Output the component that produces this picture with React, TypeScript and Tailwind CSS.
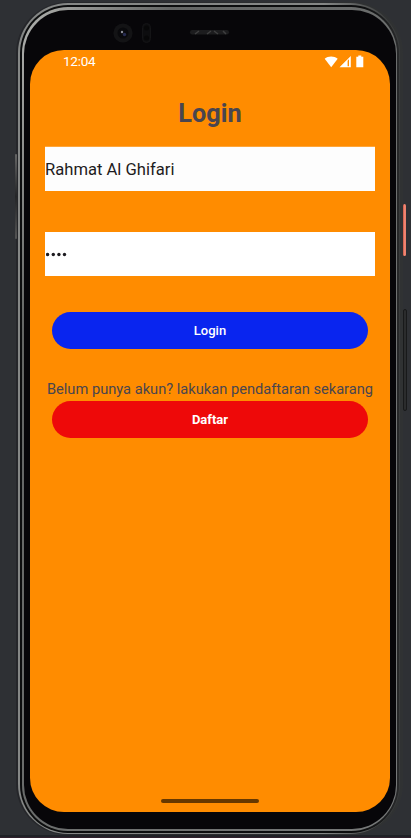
import React from "react";

function StatusBar() {
  return (
    <header className="flex h-6 items-center justify-between pl-[33px] pr-[26px] text-white">
      <span className="pb-0.5 text-[13.6px] leading-[22px] tracking-[-0.3px]">12:04</span>
      <div className="flex items-center">
        <svg width="40" height="14" viewBox="0 0 40 14" fill="currentColor" aria-label="Wi-Fi, signal, battery">
          <path d="M0.7 3.7C4 0.6 10.2 0.6 13.7 3.7L7.2 12.2Z" />
          <path fillRule="evenodd" d="M15.5 12.2L26.8 1V12.2ZM23.6 5.7V11.2H25V4.3Z" />
          <path d="M34.3 .5h3v1.2h2V12.3h-7V1.7h2Z" />
        </svg>
      </div>
    </header>
  );
}

function Screen() {
  return (
    <main className="relative flex h-[762px] w-[360px] flex-col overflow-hidden rounded-[34px] bg-[#ff8c00]">
      <StatusBar />
      <h1 className="mt-[22px] h-9 text-center text-[25.3px] leading-9 font-bold text-[#49454f]">Login</h1>
      <div className="mx-[15px] mt-[14px] h-px bg-[#ffa63a]" />
      <div className="mx-[15px] flex h-11 items-center bg-[#fdfdfd] pt-[2px] text-[16.6px] text-[#1d1b20]">
        <span>Rahmat Al Ghifari</span>
      </div>
      <div className="mx-[15px] mt-[41px] flex h-11 items-center bg-white pt-px pl-px" aria-label="Password">
        <svg width="22" height="5" viewBox="0 0 22 5" fill="#1d1b20">
          <circle cx="1.6" cy="2.5" r="1.7" />
          <circle cx="7.3" cy="2.5" r="1.7" />
          <circle cx="12.9" cy="2.5" r="1.7" />
          <circle cx="18.5" cy="2.5" r="1.7" />
        </svg>
      </div>
      <button className="mx-[22px] mt-9 h-[37px] rounded-full bg-[#0925ef] text-[13px] font-medium text-white">Login</button>
      <p className="mt-[29px] h-[23px] text-center text-[14.65px] leading-[23px] whitespace-nowrap text-[#49454f]">
        Belum punya akun? lakukan pendaftaran sekarang
      </p>
      <button className="mx-[22px] h-[37px] rounded-full bg-[#ee0909] pt-px text-[13px] font-bold text-white">Daftar</button>
      <div className="mx-auto mt-auto mb-[9px] h-1 w-[98px] rounded-full bg-[#663800]" />
    </main>
  );
}

function Camera() {
  return (
    <svg className="absolute left-[89px] top-[12px]" width="120" height="28" viewBox="0 0 120 28">
      <circle cx="10" cy="11" r="9.6" fill="#131315" />
      <circle cx="10" cy="11" r="5.5" fill="#09090c" />
      <circle cx="9" cy="10" r="1.2" fill="#8d8f99" />
      <circle cx="11.5" cy="12.5" r="1.7" fill="#262b50" />
      <rect x="29.5" y="1.5" width="8" height="19" rx="4" fill="#0d0d0f" stroke="#141416" />
      <circle cx="33.5" cy="6" r="2.5" fill="#070708" />
      <circle cx="33.5" cy="16" r="2.5" fill="#070708" />
      <rect x="77" y="8" width="39" height="4.5" rx="2.2" fill="#1c1c1e" />
      <path d="M82 12l4-3M94 12l4-3M101 9l4 3M110 9l3 3" stroke="#3e3e3f" strokeWidth="1.5" />
    </svg>
  );
}

export default function App() {
  return (
    <div className="relative h-[838px] w-[411px] overflow-hidden bg-[#2e3034] font-['Roboto',sans-serif]">
      <div className="absolute left-[15px] top-[154px] h-[85px] w-0.5 rounded-full bg-linear-to-b from-[#666] via-[#242527] to-[#555]" />
      <div className="absolute left-[403px] top-[204px] h-[52px] w-[3px] rounded-[2px] bg-linear-to-r from-[#c75745] via-[#f08471] to-[#ed806d]" />
      <div className="absolute left-[403px] top-[309px] h-[102px] w-[4px] rounded-[2px] border border-[#18191a] bg-[#2b2c2d]" />
      <div className="absolute inset-x-0 bottom-0 h-[3px] border-b border-[#30202c] bg-[#202126]" />
      <div className="ml-4 h-[838px] w-[387px] pt-[2px] pb-[3px]">
        <div className="h-full rounded-[51px] bg-linear-to-r from-[#25262a] to-[#303233] pt-px pr-[3px] pb-px pl-[2px]">
          <div className="h-full rounded-[50px] bg-linear-to-r from-[#858786] from-80% to-[#3a3c3c] to-97% pt-[2px] pr-[1.5px] pb-px pl-[1.5px]">
            <div className="h-full rounded-[48px] bg-linear-to-r from-[#0c0d0e] from-90% to-[#28292a] pt-[2px] pr-[1.5px] pb-[2px] pl-[2.5px]">
              <div className="h-full rounded-[46px] bg-linear-to-br from-[#b2b3b0] via-[#646665] via-20% to-[#777979] pt-[3px] pr-[1.5px] pb-[2px] pl-[2px]">
                <div className="relative h-full rounded-[44px] bg-[#070609] pt-10 pl-[6px]">
                  <Camera />
                  <Screen />
                </div>
              </div>
            </div>
          </div>
        </div>
      </div>
    </div>
  );
}
